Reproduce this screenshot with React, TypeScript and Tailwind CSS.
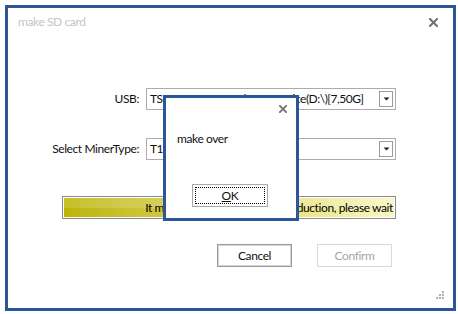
import React from "react";

const font = { fontFamily: "Lato, 'Noto Sans', sans-serif" };

const CloseIcon = ({ size = 9 }: { size?: number }) => (
  <svg width={size} height={size} viewBox="0 0 9 9">
    <path d="M1 1 L8 8 M8 1 L1 8" stroke="#707070" strokeWidth="2" strokeLinecap="square" />
  </svg>
);

const Select = ({ value }: { value: string }) => (
  <div className="ml-[7px] flex h-[22px] w-[250px] items-center border border-[#acacac] bg-white">
    <div className="flex-1 overflow-hidden whitespace-nowrap pl-[3px] text-[12px] tracking-[-0.5px] text-[#111]">{value}</div>
    <div className="mr-[2px] flex h-[16px] w-[14px] items-center justify-center border border-[#9a9a9a] bg-white">
      <svg width="7" height="4" viewBox="0 0 7 4">
        <path d="M0.5 0.5 L6.5 0.5 L3.5 3.5 Z" fill="#222" />
      </svg>
    </div>
  </div>
);

export default function App() {
  return (
    <div className="h-[314px] w-[458px] bg-white pl-[5px] pt-[5px] tracking-[-0.4px]" style={font}>
      <div className="relative flex h-[306px] w-[451px] flex-col border-[3px] border-[#2b579a] bg-white">
        {/* title bar */}
        <div className="flex h-[28px] items-center justify-between pl-[10px] pr-[15px]">
          <span className="text-[12px] text-[#c4c4c4]">make SD card</span>
          <CloseIcon />
        </div>

        <div className="mt-[52px] flex items-center">
          <div className="w-[131px] text-right text-[12px] text-[#111]">USB:</div>
          <Select value="TS-RDF5 Transcend USB Device(D:\)[7,50G]" />
        </div>

        <div className="mt-[28px] flex items-center">
          <div className="w-[131px] text-right text-[12px] text-[#111]">Select MinerType:</div>
          <Select value="T17" />
        </div>

        <div className="ml-[54px] mt-[36px] h-[23px] w-[334px] border border-[#8c8c8c] bg-white p-px">
          <div className="relative h-full w-full bg-gradient-to-r from-[#bdb500] via-[#ddd452] to-[#fbf8c4]">
            <div className="absolute inset-x-0 top-0 h-1/2 bg-white/15" />
            <div className="relative flex h-full items-center justify-end overflow-hidden whitespace-nowrap pr-px text-[12px] text-black">
              It may take few minutes for production, please wait
            </div>
          </div>
        </div>

        <div className="ml-[209px] mt-[25px] flex gap-[25px]">
          <button className="h-[23px] w-[75px] border border-[#9c9c9c] bg-white text-[12px] text-[#111] shadow-[inset_0_0_0_1px_#d4d4d4]">
            Cancel
          </button>
          <button className="h-[23px] w-[75px] border border-[#d9d9d9] bg-white text-[12px] text-[#a6a6a6]">
            Confirm
          </button>
        </div>

        {/* resize grip */}
        <div className="mt-auto mb-[8px] mr-[8px] self-end">
          <svg width="9" height="9" viewBox="0 0 9 9">
            <rect x="6" y="0" width="2" height="2" fill="#b0b0b0" />
            <rect x="3" y="3" width="2" height="2" fill="#b0b0b0" />
            <rect x="6" y="3" width="2" height="2" fill="#b0b0b0" />
            <rect x="0" y="6" width="2" height="2" fill="#b0b0b0" />
            <rect x="3" y="6" width="2" height="2" fill="#b0b0b0" />
            <rect x="6" y="6" width="2" height="2" fill="#b0b0b0" />
          </svg>
        </div>

        {/* message box */}
        <div className="absolute left-[155px] top-[87px] h-[126px] w-[136px] border-[3px] border-[#2b579a] bg-white">
          <div className="flex justify-end pr-[9px] pt-[7px]">
            <CloseIcon size={8} />
          </div>
          <div className="ml-[11px] mt-[18px] h-[16px] text-[12px] leading-[16px] text-[#111]">make over</div>
          <button className="ml-[26px] mt-[37px] block h-[23px] w-[76px] border border-[#a8a8a8] bg-white p-[2px] text-[12px] text-[#111]">
            <span className="flex h-full w-full items-center justify-center border border-dotted border-black">
              <span>
                <span className="underline">O</span>K
              </span>
            </span>
          </button>
        </div>
      </div>
    </div>
  );
}
